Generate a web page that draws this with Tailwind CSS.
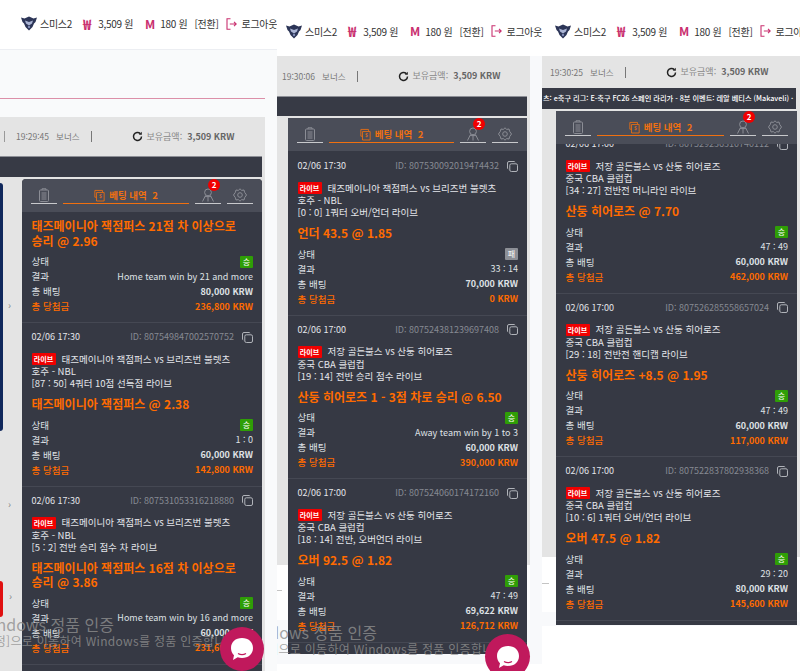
<!DOCTYPE html>
<html lang="ko">
<head>
  <meta charset="UTF-8" />
  <meta name="viewport" content="width=device-width, initial-scale=1.0" />
  <script src="https://cdn.jsdelivr.net/npm/@tailwindcss/browser@4"></script>
  <title>베팅 내역</title>
</head>
<body class="bg-white font-['Noto_Sans_CJK_KR','Noto_Sans',sans-serif]">
  <div class="relative w-[800px] h-[671px] overflow-hidden">

    <!-- left capture -->
    <section class="absolute left-0 top-0 w-[277px] h-[671px] overflow-hidden bg-white">
      <div data-topbar class="h-[50px] pl-[21px] pb-[2px] flex items-center whitespace-nowrap border-b border-[#eceef2]"></div>
      <div class="h-[621px] bg-[#f9fafb]">
        <div class="h-[49px] w-[265px] border-b border-[#dc8fa8]"></div>
        <div class="w-[265px] h-[572px] mt-[18px] bg-[#e4e4e4]">
          <div data-balance="19:29:45" data-lead="1" class="h-[39px] pl-[4px] flex items-center"></div>
          <div class="h-[21px] w-[262px] bg-[#373a45] border-t border-[#8d8f96]"></div>
          <div class="flex pt-[2px]">
            <div class="relative w-[22px] shrink-0">
              <div class="absolute left-0 top-[4px] w-[3px] h-[248px] rounded-r-sm bg-[#10285c]"></div>
              <div class="absolute left-0 top-[402px] w-[3px] h-[36px] rounded-r-sm bg-[#e01010]"></div>
              <span class="absolute left-[8px] top-[120px] text-[10px] leading-3 text-[#888]">›</span>
              <span class="absolute left-[8px] top-[319px] text-[10px] leading-3 text-[#888]">›</span>
              <span class="absolute left-[9px] top-[411px] text-[10px] leading-3 text-[#888]">›</span>
            </div>
            <div data-panel="0" class="w-[240px] h-[500px] rounded-t-[4px] overflow-hidden bg-[#363944]"></div>
          </div>
        </div>
      </div>
      <div class="absolute left-0 top-[615px] whitespace-nowrap text-[#8f8f8f]/80">
        <p class="-ml-[22px] text-[16px] leading-[18px]">Windows 정품 인증</p>
        <p class="-ml-[21px] text-[12px] leading-4 tracking-[0.3px]">[설정]으로 이동하여 Windows를 정품 인증합니다</p>
      </div>
      <div data-chat class="absolute left-[220px] top-[627px] w-[44px] h-[44px] rounded-full bg-[#c0195c] flex items-center justify-center"></div>
    </section>

    <!-- middle capture -->
    <section class="absolute left-[277px] top-0 w-[265px] h-[671px] overflow-hidden bg-white">
      <div data-topbar class="h-[56px] pl-[9px] pt-[6px] flex items-center whitespace-nowrap"></div>
      <div class="flex h-[608px]">
        <div class="w-[253px] shrink-0">
          <div class="relative z-10 h-[509px] bg-[#e4e4e4]">
            <div data-balance="19:30:06" class="h-[40px] pl-[5px] flex items-center"></div>
            <div class="h-[20px] w-[250px] bg-[#373a45] border-t border-[#8d8f96]"></div>
            <div class="flex pt-[2px]">
              <div class="w-[11px] shrink-0"></div>
              <div data-panel="1" class="w-[239px] h-[536px] overflow-hidden bg-[#363944]"></div>
            </div>
          </div>
          <div class="w-[5px] h-px mt-[25px] bg-[#c4c4c4]"></div>
          <div class="h-[44px] mt-[29px] bg-[#f8f9fb]"></div>
        </div>
        <div class="grow bg-[#f8f9fb]"></div>
      </div>
      <div class="absolute z-20 left-0 top-[623px] whitespace-nowrap text-[#8f8f8f]/80">
        <p class="-ml-[36px] text-[16px] leading-[18px]">Windows 정품 인증</p>
        <p class="-ml-[30px] text-[12px] leading-4 tracking-[0.3px]">[설정]으로 이동하여 Windows를 정품 인증합니다</p>
      </div>
      <div data-chat class="absolute z-20 left-[208px] top-[634px] w-[45px] h-[45px] rounded-full bg-[#c0195c] flex items-center justify-center"></div>
    </section>

    <!-- right capture -->
    <section class="absolute left-[542px] top-0 w-[258px] h-[671px] overflow-hidden bg-white">
      <div data-topbar class="h-[56px] pl-[13px] pt-[6px] flex items-center whitespace-nowrap"></div>
      <div class="relative z-10 h-[501px] bg-[#e4e4e4]">
        <div data-balance="19:30:25" class="h-[32px] pl-[8px] flex items-center"></div>
        <div class="h-[21px] w-[254px] px-[1px] bg-[#373a45] overflow-hidden whitespace-nowrap text-[7.200px] leading-[21px] font-medium text-white">츠: e축구 리그: E-축구 FC26 스페인 라리가 - 8분 이벤트: 레알 베티스 (Makaveli) ·</div>
        <div class="flex pt-[2px]">
          <div class="w-[14px] shrink-0"></div>
          <div data-panel="2" class="w-[241px] h-[514px] overflow-hidden bg-[#363944]"></div>
        </div>
      </div>
      <div class="w-[7px] h-px mt-[26px] bg-[#c4c4c4]"></div>
      <div class="h-[14px] mt-[28px] bg-[#f8f9fb]"></div>
    </section>
  </div>

  <script>
    const iconList = `<svg width="12" height="14" viewBox="0 0 12 14" fill="none" stroke="currentColor" stroke-width="1"><rect x="1.5" y="2" width="9" height="11.5" rx="1"/><path d="M4 2V.8h4V2M3.5 5h5M3.5 7h5M3.5 9h5M3.5 11h5"/></svg>`;
    const iconBet = `<svg width="11" height="13" viewBox="0 0 13 14" fill="none" stroke="currentColor" stroke-width="1"><path d="M1 9V1h9v2M3 3.500h9v10H3zM1 9h2"/><text x="7.500" y="10.500" text-anchor="middle" font-size="6" fill="currentColor" stroke="none" font-family="Noto Sans">$</text></svg>`;
    const iconUser = `<svg width="14" height="14" viewBox="0 0 14 14" fill="none" stroke="currentColor" stroke-width="1"><circle cx="7" cy="4.400" r="3.400"/><path d="M4.600 7.400 1.500 13.500M9.400 7.400l3.100 6.100M7 8v5.500M4 8.600h6"/></svg>`;
    const iconGear = `<svg width="14" height="14" viewBox="0 0 14 14" fill="none" stroke="currentColor" stroke-width="1"><path d="M7 .8 8.700 2.400 11 2l.6 2.300L13.500 7l-1.900 2.700L11 12l-2.300-.4L7 13.200 5.300 11.600 3 12l-.6-2.300L.5 7l1.900-2.700L3 2l2.300.4z"/><circle cx="7" cy="7" r="2.300"/></svg>`;
    const iconCopy = `<svg width="11" height="11" viewBox="0 0 11 11" fill="none" stroke="currentColor" stroke-width="1"><rect x="2.800" y="2.800" width="7.700" height="7.700" rx="1.500"/><path d="M8 1.200A.9.900 0 0 0 7.200.5H2A1.500 1.500 0 0 0 .5 2v5.200c0 .4.300.7.700.8"/></svg>`;

    const logo = `<svg width="16" height="15" viewBox="0 0 16 15" class="mr-[3px] shrink-0"><path d="M0 1.500 3.500 2.500 8 .5l4.500 2L16 1.500 14.500 6l-1.500 1.500L11.500 11 8 14.500 4.500 11 3 7.500 1.500 6z" fill="#2c3557"/><path d="M4 4.500 8 6l4-1.500-1 3L8 9.500 5 7.500z" fill="#aab4d4"/><circle cx="8" cy="11" r="1.200" fill="#7f8bb5"/></svg>`;
    const logout = `<svg width="11" height="12" viewBox="0 0 11 12" fill="none" stroke="#c9306f" stroke-width="1.100"><path d="M4.500.8H1v10.400h3.500M3.800 6h6.400M8 3.800 10.200 6 8 8.200"/></svg>`;

    document.querySelectorAll("[data-topbar]").forEach(el => {
      el.innerHTML = `
        ${logo}
        <span class="text-[10px] tracking-[-0.3px] text-[#333]">스미스2</span>
        <span class="ml-[11px] text-[14px] font-bold leading-3 text-[#c9306f]">₩</span>
        <span class="ml-[7px] text-[10px] tracking-[-0.3px] text-[#333]">3,509 원</span>
        <span class="ml-[12px] text-[12px] font-bold leading-3 text-[#c9306f]">M</span>
        <span class="ml-[5px] text-[10px] tracking-[-0.3px] text-[#333]">180 원</span>
        <span class="ml-[7px] text-[10px] tracking-[-0.3px] text-[#333]">[전환]</span>
        <span class="ml-[8px] mr-[4px] shrink-0">${logout}</span>
        <span class="text-[10px] tracking-[-0.3px] text-[#333]">로그아웃</span>`;
    });

    document.querySelectorAll("[data-balance]").forEach(el => {
      const lead = el.dataset.lead ? `<span class="w-px h-[11px] mr-[11px] bg-[#999]"></span>` : "";
      el.innerHTML = `
        ${lead}
        <span class="text-[8.500px] text-[#777]">${el.dataset.balance}</span>
        <span class="ml-[7px] text-[8.500px] text-[#777]">보너스</span>
        <span class="w-px h-[11px] ml-[11px] bg-[#777]"></span>
        <svg width="11" height="11" viewBox="0 0 11 11" fill="none" stroke="#222" stroke-width="1.500" class="ml-[40px] mr-[4px]"><path d="M9.500 5.500A4 4 0 1 1 8.300 2.600"/><path d="M9.800.8v3H6.800z" fill="#222" stroke="none"/></svg>
        <span class="text-[9px] text-[#888]">보유금액:</span>
        <span class="ml-[5px] text-[9px] font-bold text-[#666]">3,509 KRW</span>`;
    });

    document.querySelectorAll("[data-chat]").forEach(el => {
      el.innerHTML = `<svg width="26" height="26" viewBox="0 0 26 26"><path d="M13 2c6.500 0 11 4 11 10s-4.500 10-11 10c-1.500 0-3-.2-4.300-.7L4 24l1-4.800C3 17.300 2 15 2 12 2 6 6.500 2 13 2z" fill="#fff"/><path d="M9 17.500c2.500 1.500 5.500 1.500 8 0" fill="none" stroke="#c0195c" stroke-width="1.300"/></svg>`;
    });

    const tigers = "태즈메이니아 잭점퍼스 vs 브리즈번 불렛츠";
    const nbl = "호주 - NBL";
    const golden = "저장 골든불스 vs 산둥 히어로즈";
    const cba = "중국 CBA 클럽컵";

    const panels = [
      { offset: 0, pad: "", cards: [
        { title: "태즈메이니아 잭점퍼스 21점 차 이상으로 승리 @ 2.96", result: "Home team win by 21 and more", stake: "80,000", win: "236,800" },
        { date: "02/06 17:30", id: "807549847002570752", match: tigers, league: nbl, market: "[87 : 50] 4쿼터 10점 선득점 라이브", title: "태즈메이니아 잭점퍼스 @ 2.38", result: "1 : 0", stake: "60,000", win: "142,800" },
        { date: "02/06 17:30", id: "807531053316218880", match: tigers, league: nbl, market: "[5 : 2] 전반 승리 점수 차 라이브", title: "태즈메이니아 잭점퍼스 16점 차 이상으로 승리 @ 3.86", result: "Home team win by 16 and more", stake: "60,000", win: "231,600" }
      ]},
      { offset: 0, pad: "pt-[1px]", cards: [
        { date: "02/06 17:30", id: "807530092019474432", match: tigers, league: nbl, market: "[0 : 0] 1쿼터 오버/언더 라이브", title: "언더 43.5 @ 1.85", lost: true, result: "33 : 14", stake: "70,000", win: "0" },
        { date: "02/06 17:00", id: "807524381239697408", match: golden, league: cba, market: "[19 : 14] 전반 승리 점수 라이브", title: "산둥 히어로즈 1 - 3점 차로 승리 @ 6.50", result: "Away team win by 1 to 3", stake: "60,000", win: "390,000" },
        { date: "02/06 17:00", id: "807524060174172160", match: golden, league: cba, market: "[18 : 14] 전반, 오버언더 라이브", title: "오버 92.5 @ 1.82", result: "47 : 49", stake: "69,622", win: "126,712" }
      ]},
      { offset: -14, pad: "", cards: [
        { date: "02/06 17:00", id: "807529236310740112", match: golden, league: cba, market: "[34 : 27] 전반전 머니라인 라이브", title: "산둥 히어로즈 @ 7.70", result: "47 : 49", stake: "60,000", win: "462,000" },
        { date: "02/06 17:00", id: "807526285558657024", match: golden, league: cba, market: "[29 : 18] 전반전 핸디캡 라이브", title: "산둥 히어로즈 +8.5 @ 1.95", result: "47 : 49", stake: "60,000", win: "117,000" },
        { date: "02/06 17:00", id: "807522837802938368", match: golden, league: cba, market: "[10 : 6] 1쿼터 오버/언더 라이브", title: "오버 47.5 @ 1.82", result: "29 : 20", stake: "80,000", win: "145,600" }
      ]}
    ];

    function tab(icon) {
      return `<div class="w-[26px] h-[25px] pt-[8px] flex items-center justify-center border-b-[1.500px] border-[#c8c9cc] text-[#8b8d95]">${icon}</div>`;
    }

    function tabs() {
      return `<div class="relative z-10 h-[33px] px-[9px] flex items-start gap-[6px] bg-[#4a4d58]">
        ${tab(iconList)}
        <div class="grow h-[25px] pt-[8px] flex items-center justify-center gap-[4px] border-b-[1.500px] border-[#f07010] text-[#f07010]">
          ${iconBet}<span class="text-[9.500px] font-bold">베팅 내역&nbsp; 2</span>
        </div>
        <div class="relative">${tab(iconUser)}
          <span class="absolute left-[13px] top-0 w-[12px] h-[12px] rounded-full bg-[#f00000] text-white text-[8px] font-bold leading-[12px] text-center">2</span>
        </div>
        ${tab(iconGear)}
      </div>`;
    }

    function row(label, value, cls) {
      return `<div class="h-[15px] flex items-center justify-between ${cls}"><span class="text-[9.500px]">${label}</span>${value}</div>`;
    }

    function card(c) {
      const status = c.lost
        ? `<span class="w-[13px] h-[12px] rounded-[1px] bg-[#8c8f96] text-white text-[8px] leading-[12px] text-center">패</span>`
        : `<span class="w-[13px] h-[12px] rounded-[1px] bg-[#2f9e06] text-white text-[8px] leading-[12px] text-center">승</span>`;
      const head = c.date ? `
        <div class="h-[14px] flex items-center justify-between text-[9px]">
          <span class="text-[#e4e6ea]">${c.date}</span>
          <span class="flex items-center gap-[8px] text-[#868a93]">ID: ${c.id} <span class="text-[#b0b3b9]">${iconCopy}</span></span>
        </div>
        <div class="mt-[9px] h-[12px] flex items-center gap-[6px] text-[9.500px] text-[#e4e6ea]">
          <span class="w-[24px] h-[12px] rounded-[1px] bg-[#f00000] text-white text-[7px] font-bold leading-[12px] text-center">라이브</span>${c.match}
        </div>
        <div class="h-[12px] text-[9.500px] leading-[12px] text-[#e4e6ea]">${c.league}</div>
        <div class="h-[12px] text-[9.500px] leading-[12px] text-[#e4e6ea]">${c.market}</div>
        <div class="h-[8px]"></div>` : "";
      return `<article class="pl-[9.500px] pr-[9px] pt-[7px] pb-[8px] border-b border-[#454853]">
        ${head}
        <h3 class="text-[12px] leading-[14.500px] font-bold break-keep text-[#ff6b00]">${c.title}</h3>
        <div class="mt-[6px]">
          ${row("상태", status, "text-[#dfe1e5]")}
          ${row("결과", `<span class="text-[9px]">${c.result}</span>`, "text-[#dfe1e5]")}
          ${row("총 배팅", `<span class="text-[9px] font-bold">${c.stake} KRW</span>`, "text-[#dfe1e5]")}
          ${row("총 당첨금", `<span class="text-[9px] font-bold">${c.win} KRW</span>`, "font-medium text-[#ff6b00]")}
        </div>
      </article>`;
    }

    panels.forEach((p, i) => {
      const el = document.querySelector(`[data-panel="${i}"]`);
      el.innerHTML = `${tabs()}<div class="${p.pad}"><div style="margin-top:${p.offset}px">${p.cards.map(card).join("")}</div></div>`;
    });
  </script>
</body>
</html>
